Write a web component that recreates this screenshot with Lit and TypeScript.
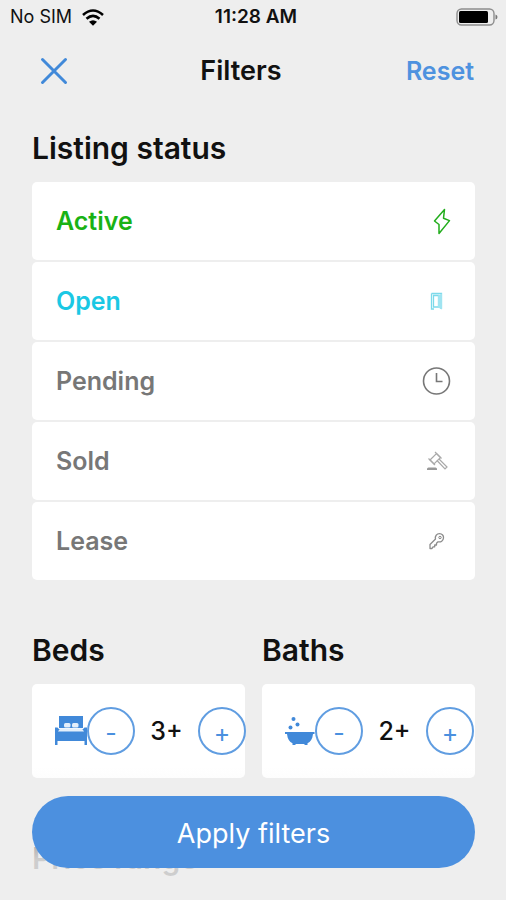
import { LitElement, html, css, svg, TemplateResult } from "lit";
import { customElement, property, state } from "lit/decorators.js";

const icons: Record<string, TemplateResult> = {
  bolt: svg`<path d="M22.500 2.500 12.500 14 17 17.500 17 26.500 27.500 13.600 21.500 11.200Z" fill="none" stroke="#22ad1c" stroke-width="1.500" stroke-linejoin="round"/>`,
  door: svg`<path d="M9.500 6.500H19.500V21H18M9.500 6.500V22H12M11.500 8.500H16.500V20H11.500Z" fill="none" stroke="#7bd9ea" stroke-width="1.300"/><path d="M16 8.500 20 6.500V22.500L16 20.500Z" fill="#a0e4f1"/>`,
  clock: svg`<circle cx="14.500" cy="14" r="13" fill="none" stroke="#777" stroke-width="1.600"/><path d="M14.500 6V14.500H20.500" fill="none" stroke="#777" stroke-width="1.600"/>`,
  gavel: svg`<g fill="none" stroke="#a9a9a9" stroke-width="1.200"><path d="m8 13 6.500-6.500 4 4L12 17Z"/><path d="m13 5 6.500 6.500M6.500 11.500l6.500 6.500M15 13.500 23 22 25 20 17 12"/></g><path d="M5 23v-1q0-1.500 1.500-1.500h7q1.500 0 1.500 1.500v1Z" fill="#999"/>`,
  key: svg`<path d="M8 21.500v-4l5.500-5.500c-.8-3 1.300-5.300 4-5.300s4.300 2 4 4.300c-.3 2.800-2.600 4.500-5.500 3.800l-1.500 1.500v1.700h-1.800v1.800h-1.700l-1 1.700Z" fill="none" stroke="#8c8c8c" stroke-width="1.300" stroke-linejoin="round"/><circle cx="18" cy="10.500" r="1.200" fill="none" stroke="#858585" stroke-width="1"/>`,
};

const bed = svg`<svg width="32" height="30" viewBox="0 0 32 30" fill="#4189d9"><path d="M4 0H28V12H4Z"/><rect x="9" y="7" width="6.500" height="4.500" rx="1.500" fill="#e4effb"/><rect x="17" y="7" width="6.500" height="4.500" rx="1.500" fill="#e4effb"/><path d="M0 11.500H2.500L4 13H28L29.500 11.500H32V29H29.500V25H2.500V29H0Z"/><path d="M5 12.500H27L29 15.500H3Z" fill="#e4effb"/></svg>`;

const bath = svg`<svg width="30" height="30" viewBox="0 0 30 30" fill="#4189d9"><circle cx="8.500" cy="3" r="2"/><circle cx="12.500" cy="8.500" r="2"/><circle cx="5.500" cy="11.500" r="2"/><path d="M0 16H29.500V18H28C27.500 23 25.500 26 22.500 27.300V29H20L19 28H11L10 29H7.500V27.300C4.500 26 2.500 23 2 18H0Z"/></svg>`;

@customElement("status-bar")
class StatusBar extends LitElement {
  static styles = css`
    :host {
      display: grid;
      grid-template-columns: 1fr auto 1fr;
      align-items: center;
      height: 34px;
      padding: 0 8px 0 10px;
      font-size: 18px;
      line-height: 24px;
      color: #111;
    }
    .carrier { display: flex; align-items: center; gap: 10px; }
    .time { font-size: 19px; font-weight: 600; padding-left: 4px; }
    .battery { justify-self: end; }
    svg { display: block; }
  `;
  render() {
    return html`
      <div class="carrier">
        <span>No SIM</span>
        <svg width="22" height="17" viewBox="0 0 22 17" fill="none" stroke="#000" stroke-width="2.600">
          <path d="M1 6Q11-3 21 6M4.500 9.800Q11 4 17.500 9.800"/>
          <path d="M7 12.800Q11 9.500 15 12.800L11 16.800Z" fill="#000" stroke="none"/>
        </svg>
      </div>
      <span class="time">11:28 AM</span>
      <svg class="battery" width="42" height="18" viewBox="0 0 42 18">
        <rect x="1" y="1" width="37" height="16" rx="4.500" fill="#eee" stroke="#8d8d8d" stroke-width="1.400"/>
        <rect x="3" y="3" width="29" height="12" rx="1.500"/>
        <path d="M39.500 6.500q2 .5 2 2.500t-2 2.500Z" fill="#777"/>
      </svg>
    `;
  }
}

@customElement("count-stepper")
class CountStepper extends LitElement {
  @property() label = "";
  @property({ type: Number }) value = 0;
  @property({ attribute: false }) icon?: TemplateResult;

  static styles = css`
    :host { display: block; min-width: 0; }
    h2 { margin: 0 0 16px; font-size: 30px; line-height: 36px; font-weight: 600; color: #111; }
    .card {
      display: flex;
      align-items: center;
      height: 94px;
      padding-left: 23px;
      border-radius: 5px;
      background: #fff;
    }
    svg { display: block; flex: none; }
    button {
      flex: none;
      width: 48px;
      height: 48px;
      padding: 4px 0 0;
      border: 2px solid #609de1;
      border-radius: 50%;
      background: none;
      font: inherit;
      font-size: 25px;
      line-height: 24px;
      color: #4a90df;
      cursor: pointer;
    }
    output { flex: 0 0 63px; text-align: center; font-size: 25px; line-height: 32px; font-weight: 500; color: #111; }
  `;
  render() {
    return html`
      <h2 id="name">${this.label}</h2>
      <div class="card" role="group" aria-labelledby="name">
        ${this.icon}
        <button aria-label="Fewer ${this.label}" @click=${() => (this.value = Math.max(0, this.value - 1))}>-</button>
        <output>${this.value}+</output>
        <button aria-label="More ${this.label}" @click=${() => this.value++}>+</button>
      </div>
    `;
  }
}

@customElement("app-root")
class AppRoot extends LitElement {
  @state() private active = new Set(["Active", "Open"]);

  private statuses = [
    { name: "Active", icon: "bolt", tone: "green" },
    { name: "Open", icon: "door", tone: "cyan" },
    { name: "Pending", icon: "clock", tone: "" },
    { name: "Sold", icon: "gavel", tone: "" },
    { name: "Lease", icon: "key", tone: "" },
  ];

  private toggle(name: string) {
    const next = new Set(this.active);
    next.has(name) ? next.delete(name) : next.add(name);
    this.active = next;
  }

  static styles = css`
    :host {
      display: flex;
      flex-direction: column;
      position: relative;
      height: 100vh;
      overflow: hidden;
      background: #eee;
      font-family: Inter, "Liberation Sans", sans-serif;
      color: #111;
    }
    button { font: inherit; padding: 0; border: 0; background: none; cursor: pointer; }
    header {
      display: flex;
      align-items: center;
      justify-content: space-between;
      height: 74px;
      padding: 0 32px;
    }
    .close { display: grid; place-items: center; width: 44px; height: 44px; }
    h1 { margin: 0; font-size: 27px; line-height: 36px; font-weight: 600; }
    .reset { font-size: 25px; line-height: 36px; font-weight: 600; color: #4e92df; }
    main { flex: 1; min-height: 0; padding: 22px 31px 0 32px; overflow: hidden; }
    h2 { margin: 0 0 16px; font-size: 30px; line-height: 36px; font-weight: 600; }
    .list { display: grid; gap: 2px; margin: 0; padding: 0; list-style: none; }
    .row {
      display: flex;
      align-items: center;
      justify-content: space-between;
      width: 100%;
      height: 78px;
      padding: 0 24px;
      border-radius: 5px;
      background: #fff;
      font-size: 25px;
      line-height: 32px;
      font-weight: 600;
      color: #777;
    }
    .green { color: #19b215; }
    .cyan { color: #1ac8e4; }
    .counts { display: grid; grid-template-columns: 1fr 1fr; gap: 17px; margin: 52px 0 62px; }
    footer {
      position: absolute;
      inset: auto 0 0;
      padding: 29px 31px 32px 32px;
      background: linear-gradient(rgba(238, 238, 238, 0), rgba(238, 238, 238, 0.85) 70%);
    }
    .apply {
      display: block;
      width: 100%;
      height: 72px;
      padding-top: 4px;
      border-radius: 36px;
      background: #4c90df;
      font-size: 27px;
      line-height: 36px;
      color: #fff;
    }
  `;
  render() {
    return html`
      <status-bar></status-bar>
      <header>
        <button class="close" aria-label="Close">
          <svg width="28" height="28" viewBox="0 0 28 28" stroke="#4189d9" stroke-width="3" stroke-linecap="round"><path d="M2.500 2.500 25.500 25.500M25.500 2.500 2.500 25.500"/></svg>
        </button>
        <h1>Filters</h1>
        <button class="reset">Reset</button>
      </header>
      <main>
        <h2>Listing status</h2>
        <ul class="list">
          ${this.statuses.map(
            (s) => html`<li>
              <button class="row ${s.tone}" aria-pressed=${this.active.has(s.name)} @click=${() => this.toggle(s.name)}>
                <span>${s.name}</span>
                <svg width="29" height="29" viewBox="0 0 29 29" aria-hidden="true">${icons[s.icon]}</svg>
              </button>
            </li>`
          )}
        </ul>
        <div class="counts">
          <count-stepper label="Beds" .value=${3} .icon=${bed}></count-stepper>
          <count-stepper label="Baths" .value=${2} .icon=${bath}></count-stepper>
        </div>
        <h2>Price range</h2>
      </main>
      <footer><button class="apply">Apply filters</button></footer>
    `;
  }
}
